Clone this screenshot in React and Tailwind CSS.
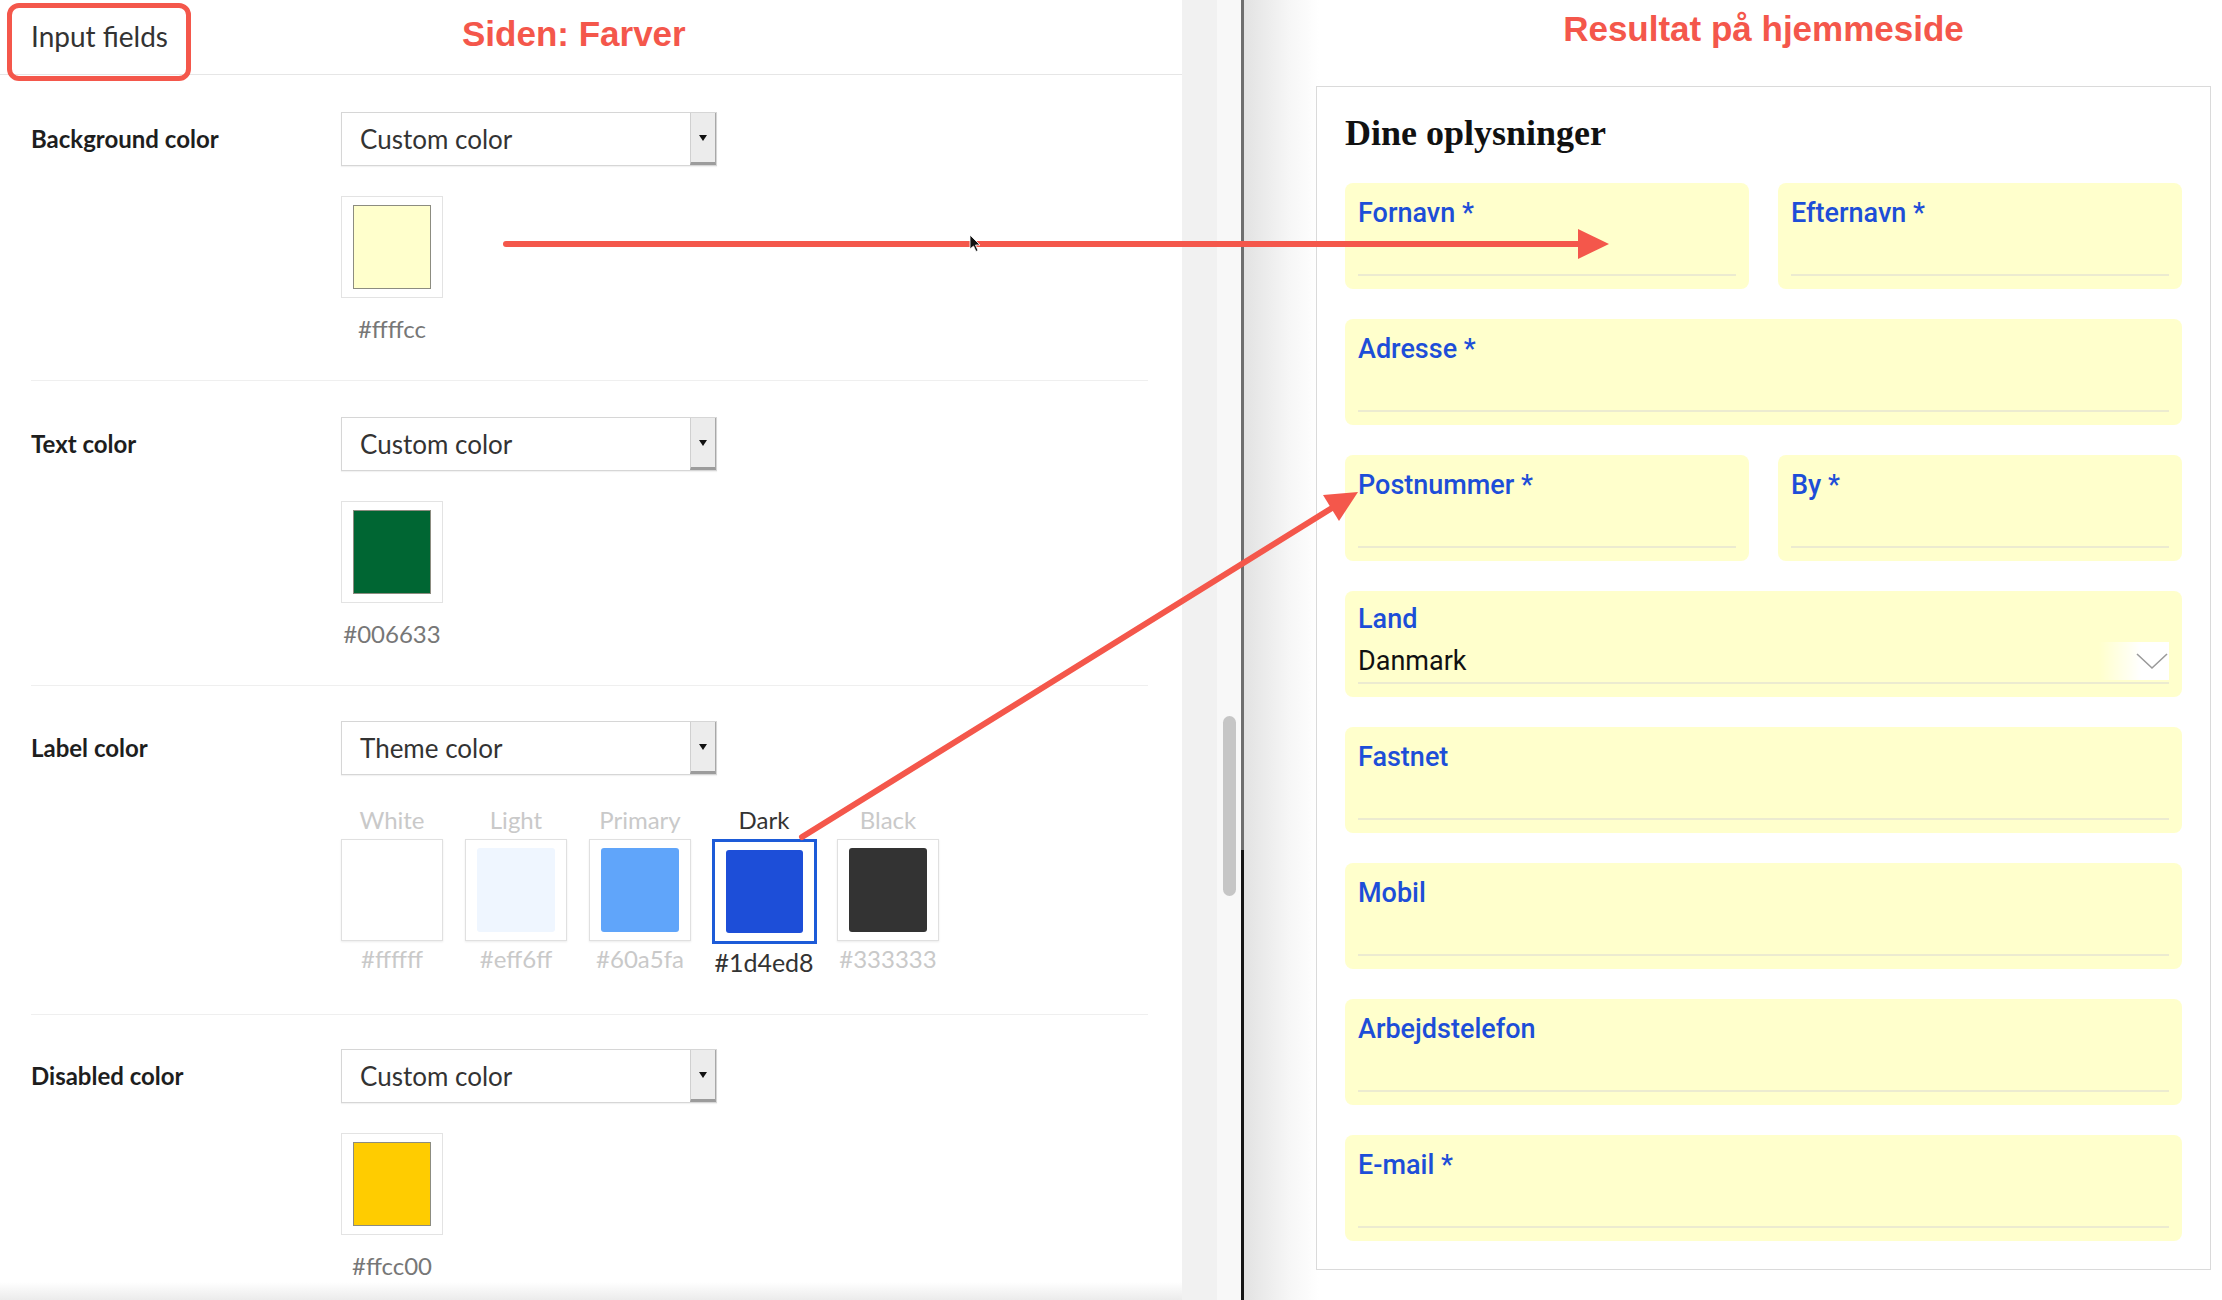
import React from "react";

const customRows = [
  { label: "Background color", value: "Custom color", swatch: "bg-[#ffffcc]", hex: "#ffffcc", h: "h-[306px]" },
  { label: "Text color", value: "Custom color", swatch: "bg-[#006633]", hex: "#006633", h: "h-[305px]" },
];

const themeColors = [
  { name: "White", hex: "#ffffff", swatch: "bg-white" },
  { name: "Light", hex: "#eff6ff", swatch: "bg-[#eff6ff]" },
  { name: "Primary", hex: "#60a5fa", swatch: "bg-[#60a5fa]" },
  { name: "Dark", hex: "#1d4ed8", swatch: "bg-[#1d4ed8]", active: true },
  { name: "Black", hex: "#333333", swatch: "bg-[#333333]" },
];

function Select({ value }) {
  return (
    <div className="w-[376px] h-[54px] flex border border-[#d6d6d6] bg-white shadow-[0_1px_1px_rgba(0,0,0,0.05)]">
      <div className="flex-1 flex items-center pl-[18px] text-[26px] text-[#333]">{value}</div>
      <div className="w-[26px] flex items-center justify-center bg-[#ececec] border-l border-[#d0d0d0] border-r border-r-[#a8a8a8] border-b-[3px] border-b-[#9c9c9c]">
        <span className="w-0 h-0 border-l-[4px] border-r-[4px] border-t-[6px] border-l-transparent border-r-transparent border-t-[#111]" />
      </div>
    </div>
  );
}

function CustomSwatch({ swatch, hex }) {
  return (
    <div className="flex flex-col mt-[30px]">
      <div className="w-[102px] h-[102px] border border-[#e3e3e3] bg-white px-[11px] py-[8px]">
        <div className={`w-full h-full border border-[#8c8c80] ${swatch}`} />
      </div>
      <div className="w-[102px] mt-[17px] text-center text-[24px] leading-[28px] text-[#777]">{hex}</div>
    </div>
  );
}

function Row({ label, value, h, pt, children, last }) {
  return (
    <div className={`flex ${h} ${pt} ${last ? "" : "border-b border-[#efefef]"}`}>
      <div className="w-[310px] h-[54px] flex items-center text-[24px] font-bold text-[#1e1e1e]">{label}</div>
      <div className="flex flex-col">
        <Select value={value} />
        {children}
      </div>
    </div>
  );
}

function Field({ label, half }) {
  return (
    <div className={`h-[106px] rounded-[8px] bg-[#ffffcc] flex flex-col px-[13px] pt-[14px] pb-[13px] ${half ? "flex-1" : ""}`}>
      <div className="text-[27px] leading-[32px] font-medium text-[#1d4ed8]">{label}</div>
      <div className="flex-1" />
      <div className="h-[2px] bg-[#ecebd0]" />
    </div>
  );
}

export default function App() {
  return (
    <div className="relative w-[2222px] h-[1300px] flex overflow-hidden bg-white">
      {/* settings panel */}
      <div className="w-[1182px] flex-shrink-0 flex flex-col bg-[linear-gradient(to_bottom,#ffffff_calc(100%-18px),#ebebeb)] font-['Lato','Open_Sans',sans-serif]">
        <div className="h-[75px] flex-shrink-0 border-b border-[#e6e6e6] flex items-center pl-[31px] pb-[2px]">
          <span className="text-[28px] text-[#333]">Input fields</span>
        </div>
        <div className="pl-[31px] pr-[34px] flex flex-col">
          {customRows.map((row, i) => (
            <Row key={row.label} label={row.label} value={row.value} h={row.h} pt={i === 0 ? "pt-[37px]" : "pt-[36px]"}>
              <CustomSwatch swatch={row.swatch} hex={row.hex} />
            </Row>
          ))}

          <Row label="Label color" value="Theme color" h="h-[329px]" pt="pt-[35px]">
            <div className="flex gap-[22px] mt-[32px]">
              {themeColors.map((c) => (
                <div key={c.name} className="flex flex-col items-center w-[102px]">
                  <div className={`text-[24px] leading-[26px] ${c.active ? "text-[#333]" : "text-[#c9c9c9]"}`}>{c.name}</div>
                  <div
                    className={`mt-[6px] bg-white px-[11px] py-[8px] ${
                      c.active ? "border-[3px] border-[#1d5bd8] w-[105px] h-[105px]" : "w-[102px] h-[102px] border border-[#e0e0e0] shadow-[0_1px_2px_rgba(0,0,0,0.08)]"
                    }`}
                  >
                    <div className={`w-full h-full rounded-[3px] ${c.swatch}`} />
                  </div>
                  <div className={`mt-[5px] ${c.active ? "text-[25px] text-[#333]" : "text-[24px] text-[#c9c9c9]"} leading-[26px]`}>{c.hex}</div>
                </div>
              ))}
            </div>
          </Row>

          <Row label="Disabled color" value="Custom color" h="h-[285px]" pt="pt-[34px]" last>
            <CustomSwatch swatch="bg-[#ffcc00]" hex="#ffcc00" />
          </Row>
        </div>
      </div>

      {/* divider with scrollbar */}
      <div className="w-[35px] flex-shrink-0 bg-[#f1f1f1]" />
      <div className="w-[24px] flex-shrink-0 bg-[#f8f8f8] flex justify-center pt-[716px]">
        <div className="w-[13px] h-[180px] rounded-full bg-[#c6c6c6]" />
      </div>
      <div className="w-[3px] flex-shrink-0 flex flex-col">
        <div className="h-[850px] bg-[#6e6e6e]" />
        <div className="flex-1 bg-[#151515]" />
      </div>

      {/* preview panel */}
      <div className="flex-1 flex flex-col bg-[linear-gradient(to_right,#e2e2e2,#f6f6f6_45px,#ffffff_75px)]">
        <div className="ml-[72px] w-[895px] h-[86px] flex justify-center pt-[9px]">
          <span className="font-['Liberation_Sans',Arial,sans-serif] font-bold text-[35px] leading-[40px] text-[#f4574b]">Resultat på hjemmeside</span>
        </div>
        <div className="ml-[72px] w-[895px] h-[1184px] border border-[#dadada] bg-white px-[28px] pt-[24px] font-['Roboto','Liberation_Sans',sans-serif]">
          <div className="font-['Liberation_Serif',Georgia,serif] font-bold text-[36px] leading-[44px] text-[#111]">Dine oplysninger</div>
          <div className="mt-[28px] flex flex-col gap-[30px]">
            <div className="flex gap-[29px]">
              <Field label="Fornavn *" half />
              <Field label="Efternavn *" half />
            </div>
            <Field label="Adresse *" />
            <div className="flex gap-[29px]">
              <Field label="Postnummer *" half />
              <Field label="By *" half />
            </div>
            <div className="h-[106px] rounded-[8px] bg-[#ffffcc] flex flex-col px-[13px] pt-[12px] pb-[13px]">
              <div className="text-[27px] leading-[32px] font-medium text-[#1d4ed8]">Land</div>
              <div className="flex-1 flex items-center justify-between pt-[4px]">
                <span className="text-[27px] leading-[32px] text-[#111]">Danmark</span>
                <div className="w-[70px] h-[38px] flex items-center justify-end bg-[linear-gradient(to_right,rgba(255,255,255,0),#ffffff_60%)]">
                  <svg width="34" height="20" viewBox="0 0 34 20" fill="none">
                    <path d="M2 3 L17 17 L32 3" stroke="#9a9a9a" strokeWidth="1.6" />
                  </svg>
                </div>
              </div>
              <div className="h-[2px] bg-[#ecebd0]" />
            </div>
            <Field label="Fastnet" />
            <Field label="Mobil" />
            <Field label="Arbejdstelefon" />
            <Field label="E-mail *" />
          </div>
        </div>
      </div>

      {/* annotations */}
      <div className="absolute left-[7px] top-[3px] w-[184px] h-[78px] border-[5px] border-[#f4574b] rounded-[12px]" />
      <div className="absolute left-[462px] top-[14px] font-['Liberation_Sans',Arial,sans-serif] font-bold text-[35px] leading-[40px] text-[#f4574b]">
        Siden: Farver
      </div>
      <svg className="absolute left-0 top-0 pointer-events-none" width="2222" height="1300" viewBox="0 0 2222 1300">
        <line x1="506" y1="244" x2="1582" y2="244" stroke="#f4574b" strokeWidth="6" strokeLinecap="round" />
        <polygon points="1578,229 1609,244 1578,259" fill="#f4574b" />
        <line x1="802" y1="837" x2="1332" y2="508" stroke="#f4574b" strokeWidth="6" strokeLinecap="round" />
        <polygon points="1339,521 1358,492 1323,495" fill="#f4574b" />
        <path d="M970 235 L970 249 L973.5 246 L976 251.5 L978 250.5 L975.5 245 L980 245 Z" fill="#111" stroke="#fff" strokeWidth="0.8" />
      </svg>
    </div>
  );
}
